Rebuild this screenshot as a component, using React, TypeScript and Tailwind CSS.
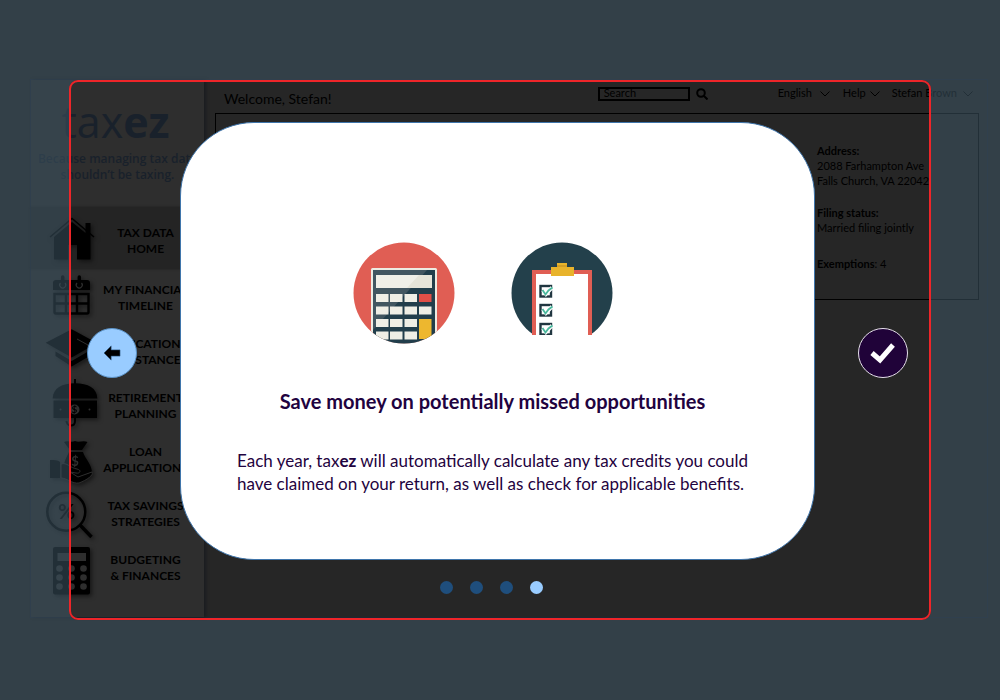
import type { ReactNode } from "react";

type NavItem = { lines: [string, string]; icon: ReactNode };

const navItems: NavItem[] = [
  {
    lines: ["TAX DATA", "HOME"],
    icon: (
      <>
        <path d="M5 23 27 4.500 49 23" fill="none" stroke="currentColor" strokeWidth="1.600" />
        <path d="M9 23 27 8 40.500 19V9h5v36.500H32V31h-9v14.500H9Z" />
      </>
    ),
  },
  {
    lines: ["MY FINANCIAL", "TIMELINE"],
    icon: (
      <>
        <path d="M11 9h31a3 3 0 0 1 3 3v7H8v-7a3 3 0 0 1 3-3Z" />
        <path d="M17.700 6v7M34.300 6v7" stroke="currentColor" strokeWidth="3.500" strokeLinecap="round" />
        <path d="M15.500 12a3 3 0 1 0 4.500 0M32 12a3 3 0 1 0 4.500 0" fill="none" stroke="#2e2e2e" strokeWidth="1.200" />
        <path d="M9.500 23h34v18a1.500 1.500 0 0 1-1.500 1.500H11A1.500 1.500 0 0 1 9.500 41ZM21 23v19M32 23v19M9.500 32.500h34" fill="none" stroke="currentColor" strokeWidth="2.400" />
      </>
    ),
  },
  {
    lines: ["EDUCATION", "ASSISTANCE"],
    icon: (
      <>
        <path d="M.7 17.700 26.700 4.300 52 18 26.700 32.500Z" />
        <path d="M10.500 26.500 26.700 36 43 26.500V32L26.700 41.500 10.500 31Z" />
        <path d="m32 14 11 6v9" fill="none" stroke="#2e2e2e" strokeWidth="1" />
      </>
    ),
  },
  {
    lines: ["RETIREMENT", "PLANNING"],
    icon: (
      <>
        <path d="M7.700 19.500C8 9 17 4.300 30 4.300S52 9 52.300 19.500Z" />
        <path d="M8.500 21.500H52V39H8.500Z" />
        <path d="M30 0v5M30 38v4c0 6-8 6-8.500 0" fill="none" stroke="currentColor" strokeWidth="2" />
        <circle cx="29.500" cy="30.500" r="5" fill="#2e2e2e" />
        <text x="29.500" y="34" textAnchor="middle" fontSize="10" fontWeight="700">$</text>
        <circle cx="15.500" cy="30.500" r="1" fill="#2e2e2e" />
        <circle cx="44.500" cy="30.500" r="1" fill="#2e2e2e" />
      </>
    ),
  },
  {
    lines: ["LOAN", "APPLICATIONS"],
    icon: (
      <>
        <path d="M19 9c4-2 7 1 11-1 4 2 8-1 12.500 1L37 17H25Z" />
        <path d="M24 19h14c2 7 9 12 9 21-6 0-11 5-17 3L19 33c0-5 3-9 5-14Z" />
        <path d="M5 27c4 0 8 0 10 2v16H5Z" />
        <path d="M16 31c6-2 9 4 16 5 5 1 3 5-1 4l-6-1 8 5 14-5c2 3-5 8-13 11-7 1-12-5-18-5Z" stroke="#2e2e2e" strokeWidth="1" />
        <text x="30" y="33" textAnchor="middle" fontSize="13" fontWeight="700" fill="#2e2e2e">$</text>
      </>
    ),
  },
  {
    lines: ["TAX SAVINGS", "STRATEGIES"],
    icon: (
      <>
        <circle cx="21.300" cy="24.700" r="19" fill="none" stroke="currentColor" strokeWidth="2.500" />
        <path d="m35 38 11.500 12" stroke="currentColor" strokeWidth="3.500" />
        <text x="21.500" y="32" textAnchor="middle" fontSize="21" fontWeight="700">%</text>
      </>
    ),
  },
  {
    lines: ["BUDGETING", "& FINANCES"],
    icon: (
      <>
        <rect x="8" y="6" width="37" height="47.500" rx="2" />
        <path d="M12.500 12H41v8H12.500Z" fill="#2e2e2e" />
        {[14.5, 26.5, 38.5].map((x) =>
          [27.5, 36.5, 45.5].map((y) => <circle key={`${x}-${y}`} cx={x} cy={y} r="3.300" fill="#2e2e2e" />),
        )}
      </>
    ),
  },
];

function Chevron() {
  return (
    <svg viewBox="0 0 10 6" className="h-1.5 w-2.5" fill="none" stroke="currentColor">
      <path d="m.5.5 4.500 4.500L9.500.5" />
    </svg>
  );
}

function Sidebar() {
  return (
    <aside className="w-[173px] shrink-0 bg-[#2e2e2e] shadow-[2px_0_3px_#1a1c20]">
      <div className="h-[127px] pt-4 text-center font-['Open_Sans',sans-serif] whitespace-nowrap text-[#19212b]">
        <div className="pr-1 text-[43px] leading-[52px]">
          tax<b>ez</b>
        </div>
        <p className="flex flex-col items-center pt-[3px] text-[12px] leading-4 font-semibold">
          <span>Because managing tax data</span>
          <span>shouldn’t be taxing.</span>
        </p>
      </div>
      <nav>
        {navItems.map((item, index) => (
          <a
            key={item.lines[0]}
            href="#"
            className={
              index === 0
                ? "mb-0.5 flex h-[62px] items-center gap-[5px] bg-[#242424] pt-1.5 pl-3.5 shadow-[0_0_2px_#1c1c1c]"
                : "flex h-[54px] items-center gap-[5px] pl-3.5"
            }
          >
            <svg
              viewBox="0 0 54 54"
              className="size-[54px] shrink-0 overflow-visible drop-shadow-[2px_2px_2px_rgba(0,0,0,0.5)]"
              fill="currentColor"
            >
              {item.icon}
            </svg>
            <span className="flex w-[83px] flex-col items-center text-[12px] leading-4 font-bold whitespace-nowrap">
              <span>{item.lines[0]}</span>
              <span>{item.lines[1]}</span>
            </span>
          </a>
        ))}
      </nav>
    </aside>
  );
}

function Dashboard() {
  return (
    <div className="mt-[79px] mr-3 mb-20 ml-[30px] flex h-[539px] border border-[#202633] text-black">
      <Sidebar />
      <main className="flex min-w-0 flex-1 flex-col pr-2 pl-[11px]">
        <header className="flex h-[33px] items-center">
          <p className="pt-1 pl-[9px] text-[14px]">Welcome, Stefan!</p>
          <div className="ml-auto flex items-center gap-1.5 pb-1.5">
            <input
              aria-label="Search"
              placeholder="Search"
              className="h-[14px] w-[92px] border-2 border-black px-1 text-[11px] placeholder:text-black"
            />
            <svg viewBox="0 0 12 12" className="size-3" fill="none" stroke="currentColor" strokeWidth="2">
              <circle cx="5" cy="5" r="3.800" />
              <path d="m8 8 3.500 3.500" />
            </svg>
          </div>
          <div className="ml-[70px] flex items-center pr-1.5 pb-1.5 text-[11px] whitespace-nowrap">
            <button className="mr-[13px] flex items-center gap-2">English <Chevron /></button>
            <button className="mr-3 flex items-center gap-1">Help <Chevron /></button>
            <button className="flex items-center gap-1.5">Stefan Brown <Chevron /></button>
          </div>
        </header>
        <section className="flex h-[187px] justify-end border border-black pt-[29px] text-[11px] leading-[15px]">
          <div className="w-[161px] whitespace-nowrap">
            <b>Address:</b>
            <p>2088 Farhampton Ave</p>
            <p>Falls Church, VA 22042</p>
            <b className="mt-[17px] block">Filing status:</b>
            <p>Married filing jointly</p>
            <p className="mt-[21px]"><b>Exemptions</b>: 4</p>
          </div>
        </section>
      </main>
    </div>
  );
}

function CalculatorBadge() {
  return (
    <svg viewBox="0 0 102 102" className="size-[102px]">
      <clipPath id="calculator-clip"><circle cx="51" cy="51" r="50.500" /></clipPath>
      <g clipPath="url(#calculator-clip)">
        <path d="M0 0h102v102H0Z" fill="#e05e54" />
        <rect x="18" y="26" width="66" height="80" rx="1.500" fill="#ecebe2" />
        <path d="M20 28h62v74H20Z" fill="#223e4b" />
        <path d="M20 28h54L20 88Z" fill="#425660" />
        <path d="M23 33h56v13H23Z" fill="#f0efe7" />
        <path d="M66 33h13v13H54Z" fill="#e6e4d8" />
        {[52, 64.5, 77, 89.5].map((y, row) =>
          [23, 37, 51.5, 66].map((x, column) =>
            column === 3 && row > 1 ? null : (
              <rect key={`${x}-${y}`} x={x} y={y} width="12.500" height="8" fill={row === 0 && column === 3 ? "#e04f47" : "#efeee5"} />
            ),
          ),
        )}
        <path d="M66 77h12.500v20H66Z" fill="#edb72f" />
      </g>
    </svg>
  );
}

function ChecklistBadge() {
  return (
    <svg viewBox="0 0 102 102" className="size-[102px]">
      <clipPath id="checklist-clip"><path d="M0 0h102v93H0Z" /></clipPath>
      <g clipPath="url(#checklist-clip)">
        <circle cx="51" cy="51" r="50.500" fill="#23404b" />
        <path d="M21 28h60v65H21Z" fill="#e05e54" />
        <path d="M25 32h52v70H25Z" fill="#fff" />
        <path d="M46 21h10v4h7v9H40v-9h6Z" fill="#e8b32b" />
        <path d="M46 24h10" stroke="#bd8a20" />
        {[44, 63, 82].map((y) => (
          <g key={y} fill="none">
            <rect x="29.500" y={y} width="10.500" height="10.500" stroke="#203640" strokeWidth="2.400" />
            <path d={`m32 ${y + 4} 3 4 6-6.500`} stroke="#fff" strokeWidth="4" />
            <path d={`m31.500 ${y + 4} 3 4.500 3-4 4-3`} stroke="#4ab89d" strokeWidth="1.800" />
          </g>
        ))}
      </g>
    </svg>
  );
}

function Tour() {
  return (
    <div role="dialog" aria-label="Tour" className="absolute inset-0 overflow-hidden px-[69px] py-20">
      <div className="flex h-[540px] flex-col rounded-[9px] border-2 border-[#ee2529] pt-10 pr-[21px] pl-4 shadow-[0_0_0_2000px_rgba(62,85,100,0.55)]">
        <div className="flex items-center">
          <button aria-label="Previous" className="mt-6 grid size-[50px] shrink-0 place-items-center rounded-full border border-[#5b93c8] bg-[#99ccff]">
            <svg viewBox="0 0 20 18" className="h-4 w-[18px]" stroke="#294f75" strokeWidth=".7">
              <path d="M1 9 9 1v4.500h10v7H9V17Z" />
            </svg>
          </button>
          <section className="mx-[43px] flex h-[438px] min-w-0 flex-1 flex-col items-center rounded-[74px] border border-[#3f75ab] bg-white pt-[119px] pr-2.5 text-[#1f0340]">
            <div className="mr-5 flex gap-14">
              <CalculatorBadge />
              <ChecklistBadge />
            </div>
            <h1 className="mt-[43px] text-[20px] leading-7 font-bold whitespace-nowrap">
              Save money on potentially missed opportunities
            </h1>
            <p className="mt-[34px] text-[17px] leading-[23px] whitespace-nowrap">
              Each year, tax<b>ez</b> will automatically calculate any tax credits you could
              <br />
              have claimed on your return, as well as check for applicable benefits.
            </p>
          </section>
          <button aria-label="Finish" className="mt-6 grid size-[50px] shrink-0 place-items-center rounded-full border border-[#e6e0eb] bg-[#200339]">
            <svg viewBox="0 0 26 22" className="h-[22px] w-[26px]" fill="none" stroke="#fff" strokeWidth="5">
              <path d="m2 11 8 7L23 3" />
            </svg>
          </button>
        </div>
        <div className="mr-3 flex justify-center gap-[17px] pt-[21px]">
          {[0, 1, 2, 3].map((step) => (
            <button
              key={step}
              aria-label={`Step ${step + 1}`}
              className={step === 3 ? "h-[13px] w-[13px] rounded-full bg-[#99ccff]" : "h-[13px] w-[13px] rounded-full bg-[#1f4e7c]"}
            />
          ))}
        </div>
      </div>
    </div>
  );
}

export default function App() {
  return (
    <div className="relative min-h-screen overflow-hidden bg-[#262626] font-[Lato,sans-serif]">
      <div className="flow-root">
        <Dashboard />
      </div>
      <Tour />
    </div>
  );
}
